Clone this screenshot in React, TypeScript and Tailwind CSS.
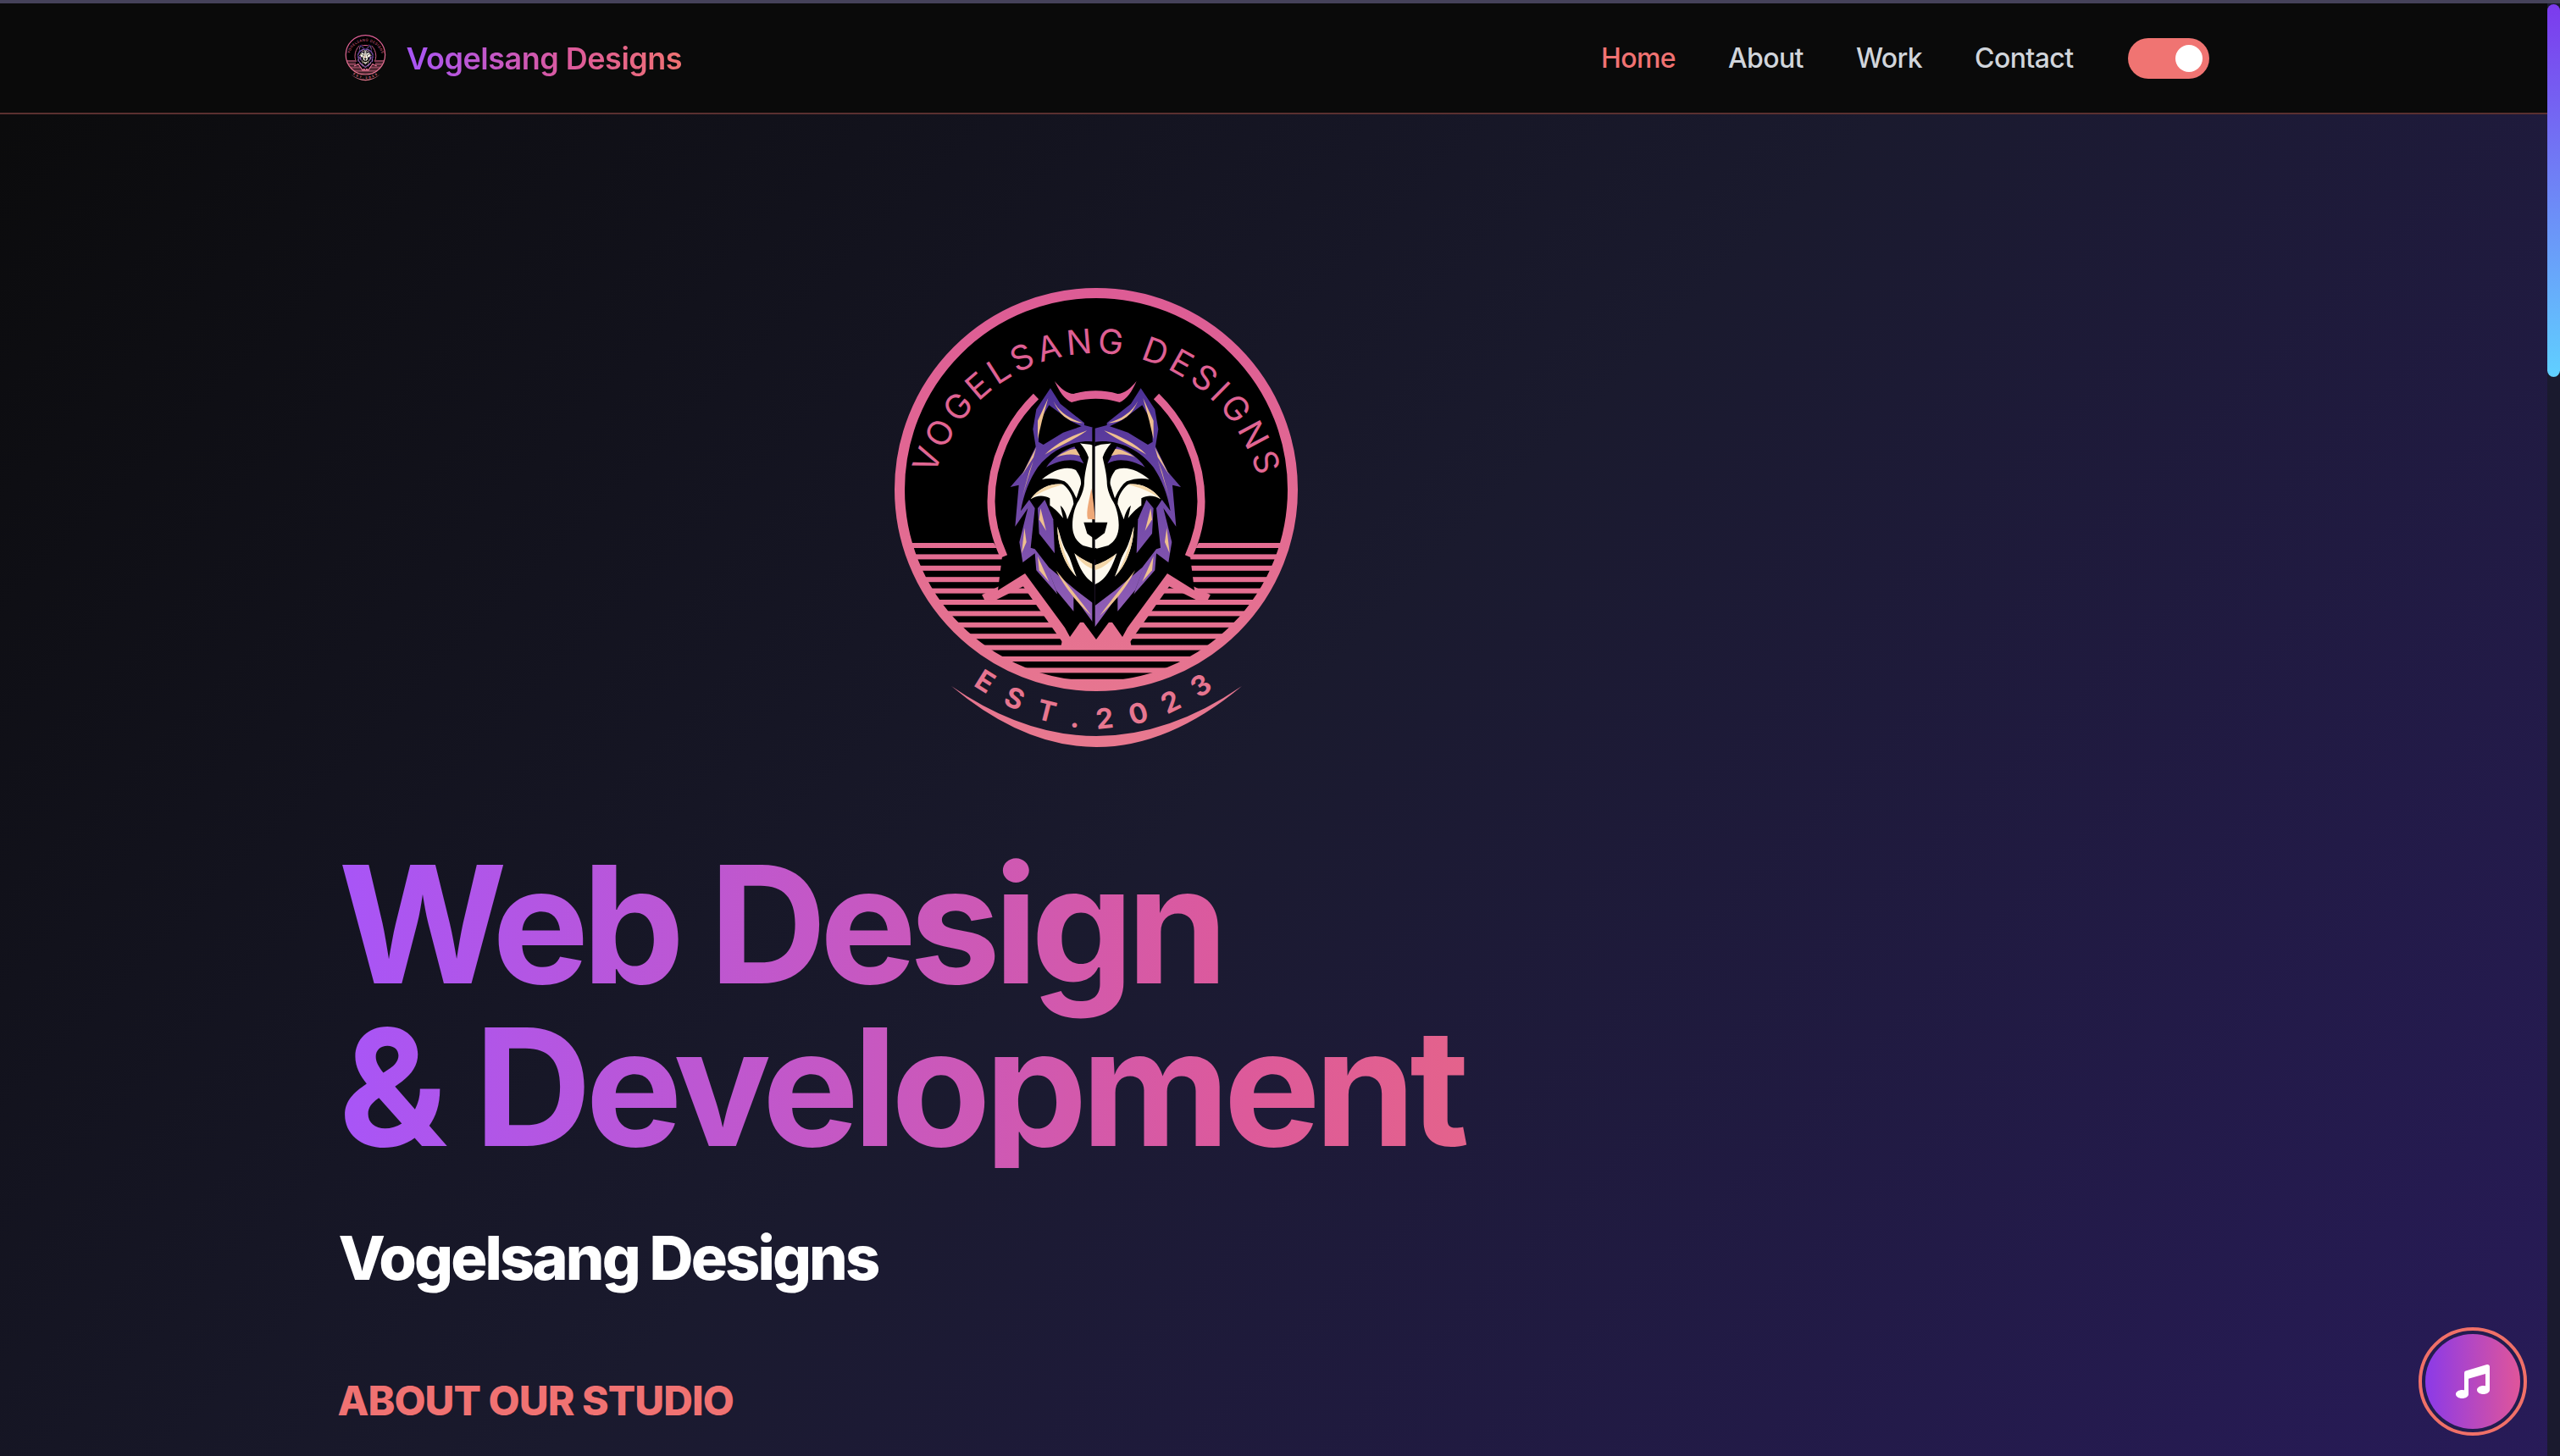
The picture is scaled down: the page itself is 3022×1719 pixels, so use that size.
import { FaMusic } from "react-icons/fa";

const PINK = "url(#vgPink)";

function WolfHalf() {
  return (
    <g>
      <path fill="url(#vgPurple)" stroke="#000" strokeWidth="20" strokeLinejoin="round" paintOrder="stroke" d="M180 55 L215 110 L300 178 L300 186 L342 197 L342 900 L305 850 L262 790 L262 845 L200 770 L170 690 L205 785 L130 700 L125 640 L82 672 L70 600 L100 480 L55 545 L68 398 L38 405 L85 350 L128 262 L118 200 L130 130 Z" />
      <path fill="#000" d="M342 245 C270 235 190 265 135 335 C105 380 85 430 75 490 L105 450 L125 480 L110 620 L125 625 L175 690 L270 770 L342 825 Z" />
      <path fill="#000" d="M175 115 L140 175 L138 245 L155 255 L225 212 L290 190 L250 170 Z" />
      <path fill="url(#vgPurple)" d="M160 450 L135 480 L140 570 L195 640 L190 520 Z" />
      <path fill="url(#vgPurple)" d="M165 335 C190 300 225 275 265 262 L298 322 C260 300 210 310 165 335 Z" />
      <g fill="#eec08f">
        <path d="M172 90 L135 170 L135 235 L150 170 Z" />
        <path d="M190 100 C210 140 250 165 295 178 C255 178 215 160 190 100 Z" />
        <path d="M160 290 C200 250 250 225 310 205 C260 240 210 260 160 290 Z" />
        <path d="M130 265 L78 365 L120 300 Z" />
        <path d="M120 310 L80 440 L105 350 Z" />
        <path d="M200 300 C220 285 250 270 270 270 L285 295 C255 285 225 290 200 300 Z" />
        <path d="M145 480 L165 560 L140 520 Z" />
        <path d="M88 550 L78 640 L95 600 Z" />
        <path d="M135 650 L140 700 L175 740 Z" />
        <path d="M200 700 C240 750 280 800 325 860 C280 820 235 770 200 700 Z" />
      </g>
      <path fill="#000" d="M280 130 L322 176 L300 170 Z" />
      <g fill="#fdf9ee">
        <path d="M285 250 C300 254 325 252 342 262 L342 625 L295 612 C272 598 258 575 258 540 C258 505 268 470 282 450 C292 430 300 410 300 385 C302 350 310 325 315 300 C308 280 298 265 285 250 Z" />
        <path d="M265 640 C290 660 320 675 342 682 L342 750 C315 738 290 715 265 640 Z" />
        <path d="M205 545 C205 610 230 680 272 722 C258 690 252 660 240 640 C225 615 218 590 205 545 Z" />
        <path d="M150 378 C190 345 235 328 270 345 C280 360 290 375 288 395 L272 445 C258 415 245 395 230 385 C205 375 175 372 150 378 Z" />
        <path d="M110 448 C140 405 190 390 225 396 C245 410 262 440 262 465 L240 520 C235 495 225 478 215 470 L225 515 C205 490 190 478 178 470 L178 445 C155 432 130 435 110 448 Z" />
      </g>
      <g fill="#f3d6a8">
        <path d="M110 448 C140 405 190 390 225 396 C190 405 145 420 110 448 Z" />
        <path d="M205 545 C205 610 230 680 272 722 C235 670 220 610 205 545 Z" />
        <path d="M265 640 C290 660 320 675 342 682 L342 700 C310 690 285 670 265 640 Z" />
      </g>
    </g>
  );
}

function Logo({ className }: { className: string }) {
  return (
    <svg viewBox="0 0 520 570" className={className}>
      <defs>
        <linearGradient id="vgPink" gradientUnits="userSpaceOnUse" x1="0" y1="10" x2="0" y2="555">
          <stop offset="0" stopColor="#dd5c95" />
          <stop offset="1" stopColor="#e8798f" />
        </linearGradient>
        <linearGradient id="vgPurple" gradientUnits="userSpaceOnUse" x1="0" y1="60" x2="0" y2="900">
          <stop offset="0" stopColor="#4c3196" />
          <stop offset="1" stopColor="#9460b8" />
        </linearGradient>
        <clipPath id="vgClip">
          <circle cx="254" cy="248" r="228" />
        </clipPath>
        <path id="vgTop" d="M55 290 A199 203 0 0 1 453 290" />
        <path id="vgBottom" d="M62 440 Q254 620 446 440" />
      </defs>
      <circle cx="254" cy="248" r="232" fill="#000" />
      <g clipPath="url(#vgClip)" fill={PINK}>
        {Array.from({ length: 13 }, (_, i) => (
          <rect key={i} x="0" y={311 + i * 13.4} width="520" height="6" />
        ))}
      </g>
      <circle cx="254" cy="248" r="232" fill="none" stroke={PINK} strokeWidth="12" />
      <path fill={PINK} d="M217 408 L254 408 L291 408 L296 436 L212 436 Z" />
      <path fill="none" stroke={PINK} strokeWidth="13" strokeLinejoin="miter" d="M122 378 L170 354 L222 428 M386 378 L338 354 L286 428" />
      <path fill="#000" d="M120 290 L143 327 L138 367 L170 347 L217 411 L223 422 L237 402 L254 425 L271 402 L285 422 L291 411 L338 347 L370 367 L365 327 L388 290 Z" />
      <path fill="none" stroke={PINK} strokeWidth="9" d="M183 138 C150 170 130 215 130 262 C130 285 135 305 145 327 M325 138 C358 170 378 215 378 262 C378 285 373 305 363 327" />
      <g transform="translate(140 110) scale(0.33333)">
        <path fill={PINK} d="M195 30 C215 55 240 75 262 75 C310 60 370 60 418 75 C440 75 465 55 485 30 C470 65 450 95 425 105 C370 88 310 88 255 105 C230 95 210 65 195 30 Z" />
        <WolfHalf />
        <g transform="translate(680 0) scale(-1 1)">
          <WolfHalf />
        </g>
        <path fill="#eea877" d="M325 410 C318 450 305 490 312 518 L338 520 C335 480 332 445 325 410 Z" />
        <path fill="#000" d="M298 530 L382 530 L372 568 L340 592 L310 570 Z" />
        <path fill="#000" d="M278 622 C300 628 325 635 340 620 C355 635 385 628 402 622 C385 650 355 660 340 662 C320 660 295 650 278 622 Z" />
      </g>
      <text fill={PINK} fontFamily="Inter, sans-serif" fontWeight="400" fontSize="40" letterSpacing="5">
        <textPath href="#vgTop" startOffset="50.5%" textAnchor="middle">VOGELSANG DESIGNS</textPath>
      </text>
      <text fill={PINK} fontFamily="Inter, sans-serif" fontWeight="700" fontSize="33" letterSpacing="21">
        <textPath href="#vgBottom" startOffset="51.5%" textAnchor="middle">EST.2023</textPath>
      </text>
      <path fill={PINK} d="M83 480 Q254 624 426 480 Q254 598 83 480 Z" />
    </svg>
  );
}

export default function App() {
  return (
    <div className="relative flex h-screen w-full flex-col overflow-hidden bg-[#1a1a2e] font-['Inter',sans-serif]">
      <div className="h-[4px] w-full shrink-0 bg-[#45425a]" />
      <div className="flex min-h-0 flex-1">
        <div className="flex min-w-0 flex-1 flex-col overflow-hidden bg-[linear-gradient(135deg,#0a0a0a_0%,#1a1a2e_50%,#2d1b69_120%)]">
          <header className="h-[131px] shrink-0 border-b-2 border-[#5a3030] bg-[#0a0a0a]">
            <div className="mx-auto flex h-full w-[2304px] items-center justify-between px-12">
              <div className="flex items-center gap-[22px]">
                <Logo className="ml-[6px] h-[57px] w-[52px]" />
                <span className="bg-[linear-gradient(90deg,#a855f7,#dd5a9a_60%,#f07272)] bg-clip-text text-[36px] leading-[56px] font-semibold tracking-[-0.5px] text-transparent">Vogelsang Designs</span>
              </div>
              <nav className="flex items-center gap-[62px] text-[32px] leading-[48px] font-medium tracking-[-0.6px] text-[#d1d5db]">
                <a className="text-[#f07272]">Home</a>
                <a>About</a>
                <a>Work</a>
                <a>Contact</a>
                <div className="ml-[2px] flex h-12 w-24 items-center justify-end rounded-full bg-[#f07472] pr-2">
                  <div className="h-8 w-8 rounded-full bg-white" />
                </div>
              </nav>
            </div>
          </header>
          <main className="mx-auto w-[2304px] px-12 pt-[195px]">
            <div className="flex w-[1800px] justify-center">
              <Logo className="h-[570px] w-[520px]" />
            </div>
            <h1 className="mt-[95px] w-[1788px] bg-[linear-gradient(90deg,#a855f7,#dd5a9a_60%,#f07272)] bg-clip-text text-[192px] leading-[192px] font-bold text-transparent">
              <span className="tracking-[-8.2px]">Web Design</span>
              <br />
              <span className="tracking-[-7.1px]">&amp; Development</span>
            </h1>
            <h2 className="mt-[66px] text-[72px] leading-[80px] font-extrabold tracking-[-2.9px] text-white">Vogelsang Designs</h2>
            <h3 className="mt-[97px] -ml-[1px] text-[48px] leading-[64px] font-extrabold tracking-[-0.95px] text-[#f07272]">ABOUT OUR STUDIO</h3>
          </main>
        </div>
        <div className="w-[15px] shrink-0 bg-[#1a1a2e] pt-[1px]">
          <div className="h-[440px] w-full rounded-full bg-[linear-gradient(180deg,#7c3aed,#60d0ff)]" />
        </div>
      </div>
      <button className="absolute right-[39px] bottom-[24px] flex h-[128px] w-[128px] items-center justify-center rounded-full border-[4px] border-[#f07068] bg-[#221c50] p-[4px]">
        <span className="flex h-full w-full items-center justify-center rounded-full bg-[linear-gradient(90deg,#8b3ae8,#e0559a)] text-white">
          <FaMusic className="h-[40px] w-[40px]" />
        </span>
      </button>
    </div>
  );
}
